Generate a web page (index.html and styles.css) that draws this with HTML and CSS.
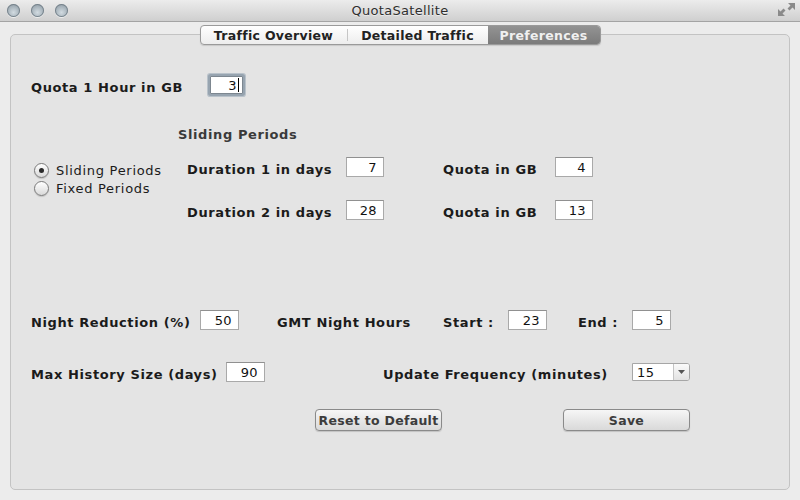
FILE: index.html
```html
<!DOCTYPE html>
<html>
<head>
<meta charset="utf-8">
<link rel="stylesheet" href="styles.css">
</head>
<body>
<div class="window">
  <div class="titlebar">
    <div class="lights"><span class="light"></span><span class="light"></span><span class="light"></span></div>
    <div class="title">QuotaSatellite</div>
    <svg class="resize" width="17" height="13" viewBox="0 0 17 13">
      <path d="M17 0 L10 0 L12.5 2.5 L9.5 5.5 L11.5 7.5 L14.5 4.5 L17 7 Z" fill="#8a8a8a"/>
      <path d="M0 13 L7 13 L4.5 10.5 L7.5 7.5 L5.5 5.5 L2.5 8.5 L0 6 Z" fill="#8a8a8a"/>
    </svg>
  </div>
  <div class="content">
    <div class="tabs">
      <div class="tabgroup">
        <div class="tab t1">Traffic Overview</div>
        <div class="tab t2">Detailed Traffic</div>
        <div class="tab t3 sel">Preferences</div>
      </div>
    </div>
    <div class="panel">
      <div class="row r1">
        <span class="lbl w176">Quota 1 Hour in GB</span>
        <span class="field focus">3<span class="caret"></span></span>
      </div>
      <div class="section-title">Sliding Periods</div>
      <div class="periods">
        <div class="radios">
          <div class="radio"><span class="dot on"></span><span>Sliding Periods</span></div>
          <div class="radio"><span class="dot"></span><span>Fixed Periods</span></div>
        </div>
        <div class="grid">
          <span class="lbl">Duration 1 in days</span>
          <span class="field w38">7</span>
          <span class="lbl q">Quota in GB</span>
          <span class="field w38">4</span>
          <span class="lbl">Duration 2 in days</span>
          <span class="field w38">28</span>
          <span class="lbl q">Quota in GB</span>
          <span class="field w38">13</span>
        </div>
      </div>
      <div class="row night">
        <span class="lbl w169">Night Reduction (%)</span>
        <span class="field">50</span>
        <span class="lbl gmt">GMT Night Hours</span>
        <span class="lbl w65">Start :</span>
        <span class="field">23</span>
        <span class="lbl endl">End :</span>
        <span class="field">5</span>
      </div>
      <div class="row hist">
        <span class="lbl w195">Max History Size (days)</span>
        <span class="field">90</span>
        <span class="lbl upd">Update Frequency (minutes)</span>
        <span class="combo"><span class="cval">15</span><span class="carrow"><svg width="9" height="6" viewBox="0 0 9 6"><path d="M1 1 L8 1 L4.5 5 Z" fill="#555"/></svg></span></span>
      </div>
      <div class="row buttons">
        <span class="btn reset">Reset to Default</span>
        <span class="btn save">Save</span>
      </div>
    </div>
  </div>
</div>
</body>
</html>
```
FILE: styles.css
```css
html, body {
  margin: 0;
  padding: 0;
}
body {
  width: 800px;
  height: 500px;
  overflow: hidden;
  font-family: "DejaVu Sans", "Liberation Sans", sans-serif;
  font-size: 13px;
  color: #1b1b1b;
  background: #eeeeee;
}
.window {
  height: 500px;
  display: flex;
  flex-direction: column;
}
.titlebar {
  height: 21px;
  border-bottom: 1px solid #a4a4a4;
  background: linear-gradient(#ececec, #cfcfcf);
  display: grid;
  grid-template-columns: 1fr auto 1fr;
  align-items: center;
}
.lights {
  display: flex;
  gap: 11px;
  padding-left: 7px;
}
.light {
  width: 13px;
  height: 13px;
  border-radius: 50%;
  box-sizing: border-box;
  background: radial-gradient(circle at 50% 65%, #d2dbe1 0%, #a7b3bb 55%, #85919a 100%);
  box-shadow: inset 0 0 0 1px #77838c, 0 1px 0 rgba(255,255,255,0.6);
}
.title {
  font-size: 13px;
  letter-spacing: 0.3px;
  color: #2e2e2e;
  text-shadow: 0 1px 0 rgba(255,255,255,0.5);
}
.resize {
  justify-self: end;
  margin-right: 5px;
  margin-top: -2px;
}
.content {
  flex: 1;
  display: flex;
  flex-direction: column;
  padding: 3px 10px 10px;
  background: #ececec;
}
.tabs {
  display: flex;
  justify-content: center;
  position: relative;
  z-index: 1;
  height: 20px;
}
.tabgroup {
  display: flex;
  border: 1px solid #9a9a9a;
  border-radius: 4px;
  overflow: hidden;
  box-shadow: 0 1px 1px rgba(0,0,0,0.12);
  background: linear-gradient(#ffffff, #ededed);
}
.tab {
  height: 18px;
  line-height: 19px;
  text-align: center;
  font-weight: bold;
  font-size: 12.5px;
  letter-spacing: 0.3px;
  color: #222;
}
.t1 { width: 146px; }
.t2 {
  width: 140px;
  border-left: 1px solid transparent;
  border-image: linear-gradient(transparent 20%, #c6c6c6 20%, #c6c6c6 80%, transparent 80%) 1;
}
.t3 { width: 112px; }
.tab.sel {
  background: linear-gradient(#939393, #7b7b7b);
  color: #f0f0f0;
}
.panel {
  flex: 1;
  margin-top: -11px;
  border: 1px solid #c3c3c3;
  border-radius: 5px;
  background: #e4e4e4;
  padding-left: 20px;
}
.row {
  display: flex;
  align-items: center;
  height: 20px;
}
.lbl {
  font-weight: bold;
  letter-spacing: 0.6px;
  white-space: nowrap;
  padding-top: 4px;
}
.w176 { width: 176px; }
.w169 { width: 169px; }
.w195 { width: 195px; }
.w65 { width: 65px; }
.gmt { margin-left: 38px; width: 166px; }
.endl { margin-left: 31px; width: 54px; }
.upd { margin-left: 118px; width: 249px; }
.field {
  width: 39px;
  height: 20px;
  box-sizing: border-box;
  background: #fff;
  border: 1px solid #a9a9a9;
  border-top-color: #909090;
  text-align: right;
  padding-right: 6px;
  line-height: 19px;
  font-size: 13px;
  letter-spacing: 0.4px;
  color: #111;
}
.w38 { width: 38px; }
.r1 {
  margin-top: 38px;
  height: 24px;
}
.field.focus {
  width: 33px;
  height: 18px;
  line-height: 17px;
  margin-left: 3px;
  padding-right: 3px;
  border-color: #7d8790;
  border-radius: 1px;
  box-shadow: 0 0 0 2px #97a4b0, 0 0 0 3px #b9c2ca;
  display: flex;
  justify-content: flex-end;
  align-items: center;
}
.caret {
  width: 1px;
  height: 14px;
  background: #000;
  margin-left: 1px;
}
.section-title {
  margin-top: 29px;
  padding-left: 147px;
  height: 16px;
  line-height: 18px;
  font-weight: bold;
  letter-spacing: 0.6px;
  color: #3a3a3a;
}
.periods {
  margin-top: 15px;
  display: flex;
}
.radios {
  width: 156px;
  padding-top: 4px;
  display: flex;
  flex-direction: column;
}
.radio {
  display: flex;
  align-items: center;
  height: 18px;
  gap: 7px;
  padding-left: 3px;
  font-size: 13px;
  letter-spacing: 0.7px;
}
.dot {
  width: 15px;
  height: 15px;
  box-sizing: border-box;
  border-radius: 50%;
  border: 1px solid #7a7a7a;
  background: linear-gradient(#ffffff, #d9d9d9);
  box-shadow: 0 1px 1px rgba(0,0,0,0.15);
  display: flex;
  align-items: center;
  justify-content: center;
}
.dot.on::after {
  content: "";
  width: 5px;
  height: 5px;
  border-radius: 50%;
  background: #2a2a2a;
}
.grid {
  display: grid;
  grid-template-columns: 159px 38px 171px 38px;
  grid-auto-rows: 20px;
  row-gap: 23px;
  align-items: center;
}
.q { padding-left: 59px; }
.night { margin-top: 90px; }
.hist { margin-top: 32px; }
.combo {
  width: 58px;
  height: 18px;
  box-sizing: border-box;
  border: 1px solid #a6a6a6;
  border-radius: 0 3px 3px 0;
  background: #fff;
  display: flex;
  font-size: 13px;
  letter-spacing: 0.4px;
  color: #111;
}
.cval {
  width: 36px;
  padding-left: 4px;
  line-height: 17px;
}
.carrow {
  flex: 1;
  border-left: 1px solid #c4c4c4;
  background: linear-gradient(#fafafa, #e2e2e2);
  border-radius: 0 2px 2px 0;
  display: flex;
  align-items: center;
  justify-content: center;
}
.buttons {
  margin-top: 27px;
  height: 22px;
}
.btn {
  width: 127px;
  height: 22px;
  box-sizing: border-box;
  border: 1px solid #8a8a8a;
  border-radius: 4px;
  background: linear-gradient(#f6f6f6, #d9d9d9);
  box-shadow: 0 1px 1px rgba(0,0,0,0.15);
  text-align: center;
  line-height: 21px;
  font-weight: bold;
  font-size: 12.5px;
  letter-spacing: 0.3px;
  color: #3c3c3c;
}
.reset { margin-left: 284px; }
.save { margin-left: 121px; }
```
